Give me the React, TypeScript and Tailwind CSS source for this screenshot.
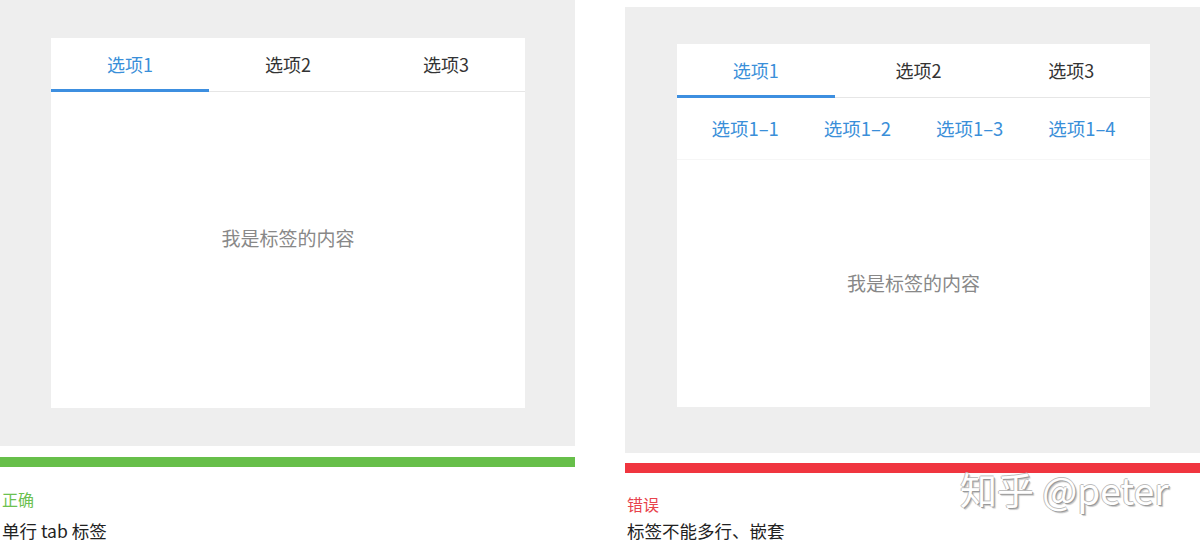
const font = { fontFamily: '"PingFang SC", "Noto Sans CJK SC", "Noto Sans", sans-serif' };

function TopTabs({ shiftMiddle = false }: { shiftMiddle?: boolean }) {
  const tabs = ['选项1', '选项2', '选项3'];
  return (
    <div className="flex h-[54px] shrink-0 border-b border-[#e6e6e6]">
      {tabs.map((t, i) => (
        <div
          key={t}
          className={`relative flex flex-1 items-center justify-center text-[18px] ${
            i === 0 ? 'text-[#3a8fd9]' : 'text-[#333333]'
          }`}
        >
          <span className={shiftMiddle && i === 1 ? 'pl-[10px]' : ''}>{t}</span>
          {i === 0 && <div className="absolute bottom-[-1px] left-0 right-0 h-[3px] bg-[#3d8fe0]" />}
        </div>
      ))}
    </div>
  );
}

function Caption({ title, color, text, gap }: { title: string; color: string; text: string; gap: string }) {
  return (
    <div className="pl-[2px]">
      <div className={`text-[16px] leading-[22px] ${color}`}>{title}</div>
      <div className={`${gap} text-[17.5px] leading-[20px] text-[#222222]`}>{text}</div>
    </div>
  );
}

export default function App() {
  return (
    <div className="relative flex h-[544px] w-[1200px] overflow-hidden bg-white" style={font}>
      {/* correct example */}
      <div className="flex w-[575px] shrink-0 flex-col">
        <div className="h-[446px] shrink-0 bg-[#eeeeee] pl-[51px] pt-[38px]">
          <div className="flex h-[370px] w-[474px] flex-col bg-white">
            <TopTabs />
            <div className="flex flex-1 items-center justify-center pb-[24px] text-[19px] text-[#888888]">
              我是标签的内容
            </div>
          </div>
        </div>
        <div className="mt-[11px] h-[10px] shrink-0 bg-[#67bf4a]" />
        <div className="mt-[21px]">
          <Caption title="正确" color="text-[#6cc150]" text="单行 tab 标签" gap="mt-[11px]" />
        </div>
      </div>

      {/* wrong example */}
      <div className="ml-[50px] flex w-[575px] shrink-0 flex-col pt-[7px]">
        <div className="h-[446px] shrink-0 bg-[#eeeeee] pl-[52px] pt-[37px]">
          <div className="flex h-[363px] w-[473px] flex-col bg-white">
            <TopTabs shiftMiddle />
            <div className="flex h-[62px] shrink-0 items-center justify-around border-b border-[#f6f6f6] px-[12px] text-[18.5px] text-[#3a8fd9]">
              <span>选项1–1</span>
              <span>选项1–2</span>
              <span>选项1–3</span>
              <span>选项1–4</span>
            </div>
            <div className="flex flex-1 items-center justify-center text-[19px] text-[#888888]">
              我是标签的内容
            </div>
          </div>
        </div>
        <div className="mt-[10px] h-[10px] shrink-0 bg-[#f0353f]" />
        <div className="mt-[20px]">
          <Caption title="错误" color="text-[#e8434c]" text="标签不能多行、嵌套" gap="mt-[6px]" />
        </div>
      </div>

      {/* watermark */}
      <div className="absolute left-[960px] top-[466px] text-[37px] leading-[46px] text-white [text-shadow:1px_1px_0_#9a9a9a,-1px_0_0_#bdbdbd,0_-1px_0_#bdbdbd,2px_2px_1px_#c8c8c8]">
        知乎 @peter
      </div>
    </div>
  );
}
